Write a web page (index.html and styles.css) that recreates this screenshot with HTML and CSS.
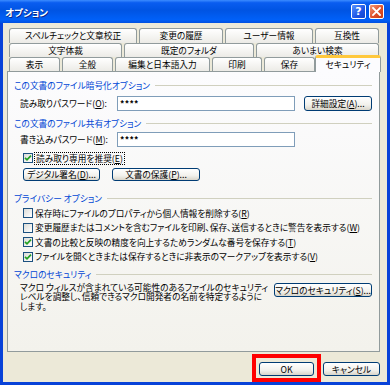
FILE: index.html
```html
<!DOCTYPE html>
<html lang="ja">
<head>
<meta charset="utf-8">
<title>オプション</title>
<link rel="stylesheet" href="styles.css">
</head>
<body>
<div class="window">
  <div class="titlebar">
    <span class="title">オプション</span>
    <span class="tbtn help">?</span>
    <span class="tbtn close"><svg width="9" height="9" viewBox="0 0 9 9"><path d="M1 1 L8 8 M8 1 L1 8" stroke="#fff" stroke-width="1.8" stroke-linecap="square"/></svg></span>
  </div>
  <div class="body">
    <div class="tabs">
      <div class="tabrow row1">
        <div class="tab">スペルチェックと文章校正</div>
        <div class="tab">変更の履歴</div>
        <div class="tab">ユーザー情報</div>
        <div class="tab">互換性</div>
      </div>
      <div class="tabrow row2">
        <div class="tab">文字体裁</div>
        <div class="tab">既定のフォルダ</div>
        <div class="tab">あいまい検索</div>
      </div>
      <div class="tabrow row3">
        <div class="tab">表示</div>
        <div class="tab">全般</div>
        <div class="tab">編集と日本語入力</div>
        <div class="tab">印刷</div>
        <div class="tab">保存</div>
        <div class="tab selected">セキュリティ</div>
      </div>
    </div>
    <div class="pane">
      <div class="heading h1">この文書のファイル暗号化オプション</div>
      <div class="field f1">
        <span class="label">読み取りパスワード(<u>O</u>):</span>
        <span class="input">****</span>
        <span class="btn adv">詳細設定(<u>A</u>)...</span>
      </div>
      <div class="heading h2">この文書のファイル共有オプション</div>
      <div class="field f2">
        <span class="label">書き込みパスワード(<u>M</u>):</span>
        <span class="input">****</span>
      </div>
      <div class="check readonly">
        <span class="cb on"><svg width="8" height="8" viewBox="0 0 8 8"><path d="M1 3.8 L3 5.8 L7 1.6" fill="none" stroke="#21A121" stroke-width="1.7"/></svg></span>
        <span class="focus">読み取り専用を推奨(<u>E</u>)</span>
      </div>
      <div class="btnrow">
        <span class="btn sig">デジタル署名(<u>D</u>)...</span>
        <span class="btn prot">文書の保護(<u>P</u>)...</span>
      </div>
      <div class="heading h3">プライバシー オプション</div>
      <div class="checklist">
        <div class="check"><span class="cb"></span><span>保存時にファイルのプロパティから個人情報を削除する(<u>R</u>)</span></div>
        <div class="check"><span class="cb"></span><span>変更履歴またはコメントを含むファイルを印刷、保存、送信するときに警告を表示する(<u>W</u>)</span></div>
        <div class="check"><span class="cb on"><svg width="8" height="8" viewBox="0 0 8 8"><path d="M1 3.8 L3 5.8 L7 1.6" fill="none" stroke="#21A121" stroke-width="1.7"/></svg></span><span>文書の比較と反映の精度を向上するためランダムな番号を保存する(<u>T</u>)</span></div>
        <div class="check"><span class="cb on"><svg width="8" height="8" viewBox="0 0 8 8"><path d="M1 3.8 L3 5.8 L7 1.6" fill="none" stroke="#21A121" stroke-width="1.7"/></svg></span><span>ファイルを開くときまたは保存するときに非表示のマークアップを表示する(<u>V</u>)</span></div>
      </div>
      <div class="heading h4">マクロのセキュリティ</div>
      <div class="macro">
        <p class="desc">マクロ ウィルスが含まれている可能性のあるファイルのセキュリティ<br>レベルを調整し、信頼できるマクロ開発者の名前を特定するように<br>します。</p>
        <span class="btn macbtn">マクロのセキュリティ(<u>S</u>)...</span>
      </div>
    </div>
    <div class="footer">
      <span class="btn ok">OK</span>
      <span class="btn cancel">キャンセル</span>
    </div>
  </div>
  <div class="highlight"></div>
</div>
</body>
</html>
```

FILE: styles.css
```css
* { box-sizing: border-box; }
body {
  margin: 0;
  font-family: "Noto Sans CJK JP", "Noto Sans", sans-serif;
  font-size: 8.7px;
  font-feature-settings: "palt";
  color: #000;
}
.window {
  position: relative;
  width: 390px;
  height: 385px;
  background: #0842D8;
  display: flex;
  flex-direction: column;
}
.titlebar {
  height: 23px;
  display: flex;
  align-items: center;
  padding: 0 6px 0 5px;
  gap: 3px;
  background: linear-gradient(#3C8CFF 0%, #0A5DF0 12%, #0054E3 45%, #0060F8 85%, #0050E0 100%);
}
.title {
  flex: 1;
  color: #fff;
  font-weight: bold;
  font-size: 9.5px;
  text-shadow: 1px 1px 0 #0A2A8A;
}
.tbtn {
  width: 15px;
  height: 15px;
  border: 1px solid #fff;
  border-radius: 2px;
  display: flex;
  align-items: center;
  justify-content: center;
  color: #fff;
  font-family: "DejaVu Sans", sans-serif;
  font-weight: bold;
  font-size: 11px;
}
.help { background: linear-gradient(135deg, #5A95FF, #1D55E5 60%, #1446CC); }
.close { background: linear-gradient(135deg, #F09A7A, #E0502A 55%, #C23A14); }
.body {
  flex: 1;
  margin: 0 3px 3px 3px;
  background: #ECE9D8;
  padding: 5px 7px 0 4px;
  display: flex;
  flex-direction: column;
}
.tabs {
  margin: 0 1px 0 2px;
  height: 43px;
}
.tabrow {
  display: grid;
  gap: 2px;
  height: 14px;
}
.tabrow.row1 { height: 15px; grid-template-columns: 128px 84px 88px 64px; }
.tabrow.row2 { grid-template-columns: 113px 130px 123px; }
.tabrow.row3 { grid-template-columns: 51px 51px 95px 50px 51px 62px; }
.tab {
  border: 1px solid #919B9C;
  border-bottom: none;
  border-radius: 3px 3px 0 0;
  background: linear-gradient(#FFFFFF, #ECEBE6);
  text-align: center;
  line-height: 13px;
  white-space: nowrap;
}
.row1 .tab { line-height: 14px; }
.tab.selected {
  position: relative;
  z-index: 1;
  margin: -2px -2px -1px -2px;
  border-top: 3px solid #FFC83C;
  background: #FCFCFE;
  line-height: 14px;
}
.pane {
  height: 281px;
  border: 1px solid #919B9C;
  background: linear-gradient(#FCFCFE, #F3F2EC);
  padding: 7px 7px 0 6px;
  display: flex;
  flex-direction: column;
}
.heading {
  height: 12px;
  display: flex;
  align-items: center;
  color: #0046D5;
  white-space: nowrap;
}
.heading::after {
  content: "";
  flex: 1;
  height: 1px;
  background: #D0D0BF;
  margin-left: 5px;
}
.h2 { margin-top: 6px; }
.h3 { margin-top: 11px; }
.h4 { margin-top: 4px; }
.field {
  display: flex;
  align-items: center;
  height: 16px;
  padding-left: 6px;
}
.f1 { margin-top: 4px; }
.f2 { margin-top: 2px; }
.label { width: 97px; white-space: nowrap; }
.input {
  width: 178px;
  height: 15px;
  border: 1px solid #7F9DB9;
  background: #fff;
  padding-left: 2px;
  line-height: 13px;
  font-weight: bold;
  letter-spacing: 0.3px;
}
.btn {
  height: 14px;
  border: 1px solid #003C74;
  border-radius: 3px;
  background: linear-gradient(#FFFFFF, #F2F1EC 60%, #D9D5CA);
  display: flex;
  align-items: center;
  justify-content: center;
  white-space: nowrap;
}
.adv { margin-left: 9px; width: 68px; height: 15px; }
.check {
  display: flex;
  align-items: center;
  white-space: nowrap;
  padding-left: 9px;
}
.readonly { margin-top: 5px; height: 12px; }
.cb {
  width: 10px;
  height: 10px;
  border: 1px solid #1C5180;
  background: linear-gradient(135deg, #DCDCD7, #FFFFFF);
  margin-right: 2px;
  display: flex;
  align-items: center;
  justify-content: center;
  flex: none;
}
.focus {
  outline: 1px dotted #000;
  padding: 0 1px;
  line-height: 11px;
}
.btnrow {
  margin-top: 4px;
  display: flex;
  gap: 12px;
  padding-left: 9px;
}
.btnrow .btn { height: 13px; }
.sig { width: 77px; }
.prot { width: 88px; }
.checklist { margin-top: 2px; }
.checklist .check { height: 14.5px; }
.macro {
  margin-top: 3px;
  display: flex;
  justify-content: space-between;
  align-items: flex-start;
}
.desc {
  margin: 0;
  padding-left: 6px;
  line-height: 9.3px;
  white-space: nowrap;
}
.macbtn { width: 98px; height: 14px; }
.footer {
  margin-top: 10px;
  display: flex;
  justify-content: flex-end;
  gap: 9px;
}
.ok { width: 55px; }
.cancel { width: 57px; }
.highlight {
  position: absolute;
  left: 252px;
  top: 354px;
  width: 69px;
  height: 28px;
  border: 4px solid #F00;
}
```
